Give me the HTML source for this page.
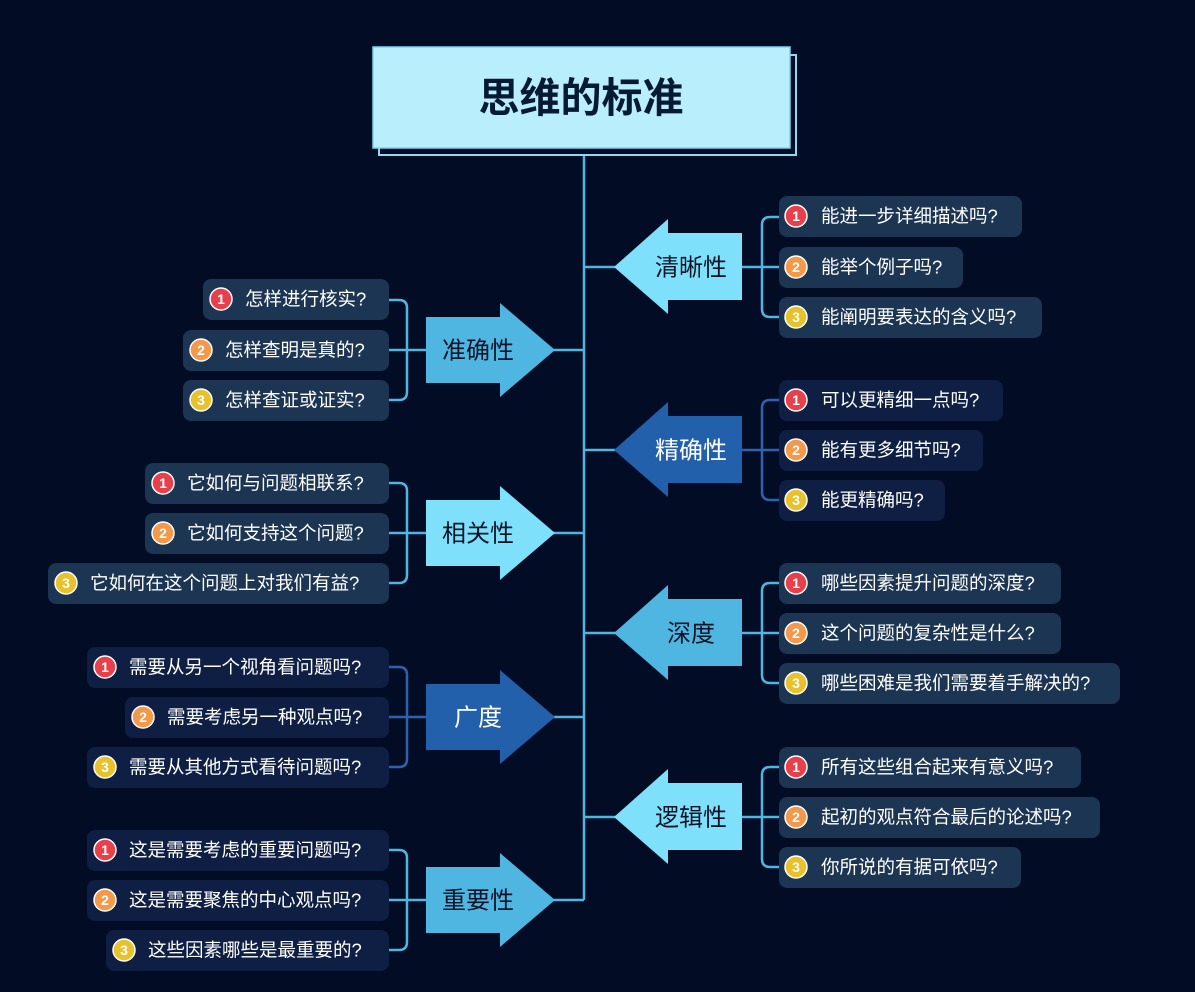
<!DOCTYPE html>
<html><head><meta charset="utf-8"><style>
html,body{margin:0;padding:0;background:#020c24;}
svg{display:block;font-family:"Liberation Sans","Noto Sans CJK SC",sans-serif;}
.t{fill:#fff;font-size:18.5px;dominant-baseline:central;}
.b{font-size:14px;font-weight:bold;fill:#fff;text-anchor:middle;dominant-baseline:central;}
.lb{font-size:24px;text-anchor:middle;dominant-baseline:central;}
.ls{fill:none;stroke:#4fb6e2;stroke-width:2.5;}
.ld{fill:none;stroke:#2c62b0;stroke-width:2.5;}
.il{fill:#1c3552;}
.id{fill:#0f1f44;}
.r{fill:#e8404a;stroke:#fff;stroke-width:1.5;}
.o{fill:#f4994a;stroke:#fff;stroke-width:1.5;}
.y{fill:#e8c22c;stroke:#fff;stroke-width:1.5;}
</style></head><body>
<svg width="1195" height="992" viewBox="0 0 1195 992">
<rect width="1195" height="992" fill="#020c24"/>
<path class="ls" d="M584,155 V900"/>
<path class="ls" d="M584,267 H620 M584,450 H620 M584,633 H620 M584,817 H620 M550,350 H584 M550,533 H584 M550,717 H584 M550,900 H584"/>
<rect x="379" y="55" width="417" height="100" fill="none" stroke="#8fd8f2" stroke-width="2"/>
<rect x="373" y="47" width="417" height="101" fill="#b9eefc" stroke="#7fd4f0" stroke-width="1.5"/>
<text x="581" y="98" text-anchor="middle" dominant-baseline="central" font-size="41" font-weight="bold" fill="#071a33">思维的标准</text>

<path class="ls" d="M742,267 H779 M779,217 H770 Q762,217 762,225 V309 Q762,317 770,317 H779"/>
<path class="ld" d="M742,450 H779 M779,400 H770 Q762,400 762,408 V492 Q762,500 770,500 H779"/>
<path class="ls" d="M742,633 H779 M779,583 H770 Q762,583 762,591 V675 Q762,683 770,683 H779"/>
<path class="ls" d="M742,817 H779 M779,767 H770 Q762,767 762,775 V859 Q762,867 770,867 H779"/>
<path class="ls" d="M426,350 H389 M389,300 H399 Q407,300 407,308 V392 Q407,400 399,400 H389"/>
<path class="ls" d="M426,533 H389 M389,483 H399 Q407,483 407,491 V575 Q407,583 399,583 H389"/>
<path class="ld" d="M426,717 H389 M389,667 H399 Q407,667 407,675 V759 Q407,767 399,767 H389"/>
<path class="ls" d="M426,900 H389 M389,850 H399 Q407,850 407,858 V942 Q407,950 399,950 H389"/>

<polygon fill="#7fe0fb" points="614,267 668,219 668,233 742,233 742,300 668,300 668,314"/>
<text class="lb" x="691" y="268" fill="#0a1426">清晰性</text>
<polygon fill="#2260ab" points="614,450 668,402 668,416 742,416 742,483 668,483 668,497"/>
<text class="lb" x="691" y="451" fill="#fff">精确性</text>
<polygon fill="#4fb6e2" points="614,633 668,585 668,599 742,599 742,666 668,666 668,680"/>
<text class="lb" x="691" y="634" fill="#0a1426">深度</text>
<polygon fill="#7fe0fb" points="614,817 668,769 668,783 742,783 742,850 668,850 668,864"/>
<text class="lb" x="691" y="818" fill="#0a1426">逻辑性</text>
<polygon fill="#4fb6e2" points="555,350 500,303 500,317 426,317 426,383 500,383 500,397"/>
<text class="lb" x="478" y="351" fill="#0a1426">准确性</text>
<polygon fill="#7fe0fb" points="555,533 500,486 500,500 426,500 426,566 500,566 500,580"/>
<text class="lb" x="478" y="534" fill="#0a1426">相关性</text>
<polygon fill="#2260ab" points="555,717 500,670 500,684 426,684 426,750 500,750 500,764"/>
<text class="lb" x="478" y="718" fill="#fff">广度</text>
<polygon fill="#4fb6e2" points="555,900 500,853 500,867 426,867 426,933 500,933 500,947"/>
<text class="lb" x="478" y="901" fill="#0a1426">重要性</text>

<rect class="il" x="779" y="196" width="243" height="41" rx="8"/><circle class="r" cx="796" cy="216" r="11"/><text class="b" x="796" y="216">1</text><text class="t" x="821" y="216">能进一步详细描述吗?</text>
<rect class="il" x="779" y="247" width="184" height="41" rx="8"/><circle class="o" cx="796" cy="267" r="11"/><text class="b" x="796" y="267">2</text><text class="t" x="821" y="267">能举个例子吗?</text>
<rect class="il" x="779" y="297" width="263" height="41" rx="8"/><circle class="y" cx="796" cy="317" r="11"/><text class="b" x="796" y="317">3</text><text class="t" x="821" y="317">能阐明要表达的含义吗?</text>

<rect class="id" x="779" y="380" width="224" height="41" rx="8"/><circle class="r" cx="796" cy="400" r="11"/><text class="b" x="796" y="400">1</text><text class="t" x="821" y="400">可以更精细一点吗?</text>
<rect class="id" x="779" y="430" width="204" height="41" rx="8"/><circle class="o" cx="796" cy="450" r="11"/><text class="b" x="796" y="450">2</text><text class="t" x="821" y="450">能有更多细节吗?</text>
<rect class="id" x="779" y="480" width="166" height="41" rx="8"/><circle class="y" cx="796" cy="500" r="11"/><text class="b" x="796" y="500">3</text><text class="t" x="821" y="500">能更精确吗?</text>

<rect class="il" x="779" y="563" width="282" height="41" rx="8"/><circle class="r" cx="796" cy="583" r="11"/><text class="b" x="796" y="583">1</text><text class="t" x="821" y="583">哪些因素提升问题的深度?</text>
<rect class="il" x="779" y="613" width="282" height="41" rx="8"/><circle class="o" cx="796" cy="633" r="11"/><text class="b" x="796" y="633">2</text><text class="t" x="821" y="633">这个问题的复杂性是什么?</text>
<rect class="il" x="779" y="663" width="341" height="41" rx="8"/><circle class="y" cx="796" cy="683" r="11"/><text class="b" x="796" y="683">3</text><text class="t" x="821" y="683">哪些困难是我们需要着手解决的?</text>

<rect class="il" x="779" y="747" width="302" height="41" rx="8"/><circle class="r" cx="796" cy="767" r="11"/><text class="b" x="796" y="767">1</text><text class="t" x="821" y="767">所有这些组合起来有意义吗?</text>
<rect class="il" x="779" y="797" width="321" height="41" rx="8"/><circle class="o" cx="796" cy="817" r="11"/><text class="b" x="796" y="817">2</text><text class="t" x="821" y="817">起初的观点符合最后的论述吗?</text>
<rect class="il" x="779" y="847" width="242" height="41" rx="8"/><circle class="y" cx="796" cy="867" r="11"/><text class="b" x="796" y="867">3</text><text class="t" x="821" y="867">你所说的有据可依吗?</text>

<rect class="il" x="203" y="279" width="186" height="41" rx="8"/><circle class="r" cx="221" cy="299" r="11"/><text class="b" x="221" y="299">1</text><text class="t" x="245" y="299">怎样进行核实?</text>
<rect class="il" x="183" y="330" width="206" height="41" rx="8"/><circle class="o" cx="201" cy="350" r="11"/><text class="b" x="201" y="350">2</text><text class="t" x="225" y="350">怎样查明是真的?</text>
<rect class="il" x="183" y="380" width="206" height="41" rx="8"/><circle class="y" cx="201" cy="400" r="11"/><text class="b" x="201" y="400">3</text><text class="t" x="225" y="400">怎样查证或证实?</text>

<rect class="il" x="145" y="463" width="244" height="41" rx="8"/><circle class="r" cx="163" cy="483" r="11"/><text class="b" x="163" y="483">1</text><text class="t" x="187" y="483">它如何与问题相联系?</text>
<rect class="il" x="145" y="513" width="244" height="41" rx="8"/><circle class="o" cx="163" cy="533" r="11"/><text class="b" x="163" y="533">2</text><text class="t" x="187" y="533">它如何支持这个问题?</text>
<rect class="il" x="48" y="563" width="341" height="41" rx="8"/><circle class="y" cx="66" cy="583" r="11"/><text class="b" x="66" y="583">3</text><text class="t" x="90" y="583">它如何在这个问题上对我们有益?</text>

<rect class="id" x="87" y="647" width="302" height="41" rx="8"/><circle class="r" cx="105" cy="667" r="11"/><text class="b" x="105" y="667">1</text><text class="t" x="129" y="667">需要从另一个视角看问题吗?</text>
<rect class="id" x="125" y="697" width="264" height="41" rx="8"/><circle class="o" cx="143" cy="717" r="11"/><text class="b" x="143" y="717">2</text><text class="t" x="167" y="717">需要考虑另一种观点吗?</text>
<rect class="id" x="87" y="747" width="302" height="41" rx="8"/><circle class="y" cx="105" cy="767" r="11"/><text class="b" x="105" y="767">3</text><text class="t" x="129" y="767">需要从其他方式看待问题吗?</text>

<rect class="id" x="87" y="830" width="302" height="41" rx="8"/><circle class="r" cx="105" cy="850" r="11"/><text class="b" x="105" y="850">1</text><text class="t" x="129" y="850">这是需要考虑的重要问题吗?</text>
<rect class="id" x="87" y="880" width="302" height="41" rx="8"/><circle class="o" cx="105" cy="900" r="11"/><text class="b" x="105" y="900">2</text><text class="t" x="129" y="900">这是需要聚焦的中心观点吗?</text>
<rect class="id" x="106" y="930" width="283" height="41" rx="8"/><circle class="y" cx="124" cy="950" r="11"/><text class="b" x="124" y="950">3</text><text class="t" x="148" y="950">这些因素哪些是最重要的?</text>
</svg>
</body></html>
